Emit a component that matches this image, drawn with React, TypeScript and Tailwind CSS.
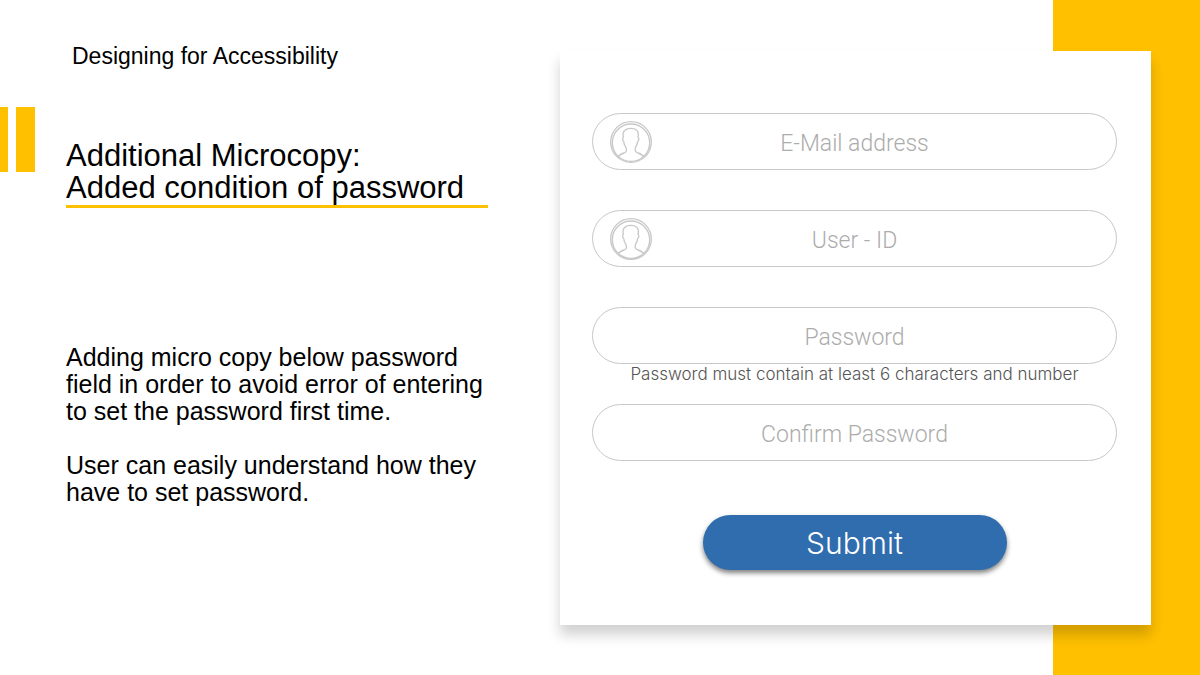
import React from "react";

function PersonIcon() {
  return (
    <svg
      viewBox="0 0 126 126"
      className="h-[42px] w-[42px] shrink-0"
      fill="none"
      stroke="#c8c8c8"
      strokeWidth="4"
      strokeLinejoin="round"
      aria-hidden="true"
    >
      <circle cx="63" cy="63" r="61" />
      <circle cx="63" cy="65" r="56" />
      <path d="M24 108 C28 101 36 98 42 96 C47 94 49 93 49 89 C50 86 49 82 47 78 C43 74 42 68 41 61 C37 59 37 51 40 50 C38 38 39 31 45 28 C50 21 72 20 79 27 C86 31 86 40 84 50 C88 51 87 59 83 61 C82 69 80 74 77 78 C75 82 75 86 76 89 C76 93 79 94 84 96 C90 98 98 101 102 108" />
    </svg>
  );
}

type FieldProps = {
  id: string;
  label: string;
  type: string;
  icon?: boolean;
  describedBy?: string;
};

function Field({ id, label, type, icon = false, describedBy }: FieldProps) {
  return (
    <label htmlFor={id} className="relative block">
      {icon && (
        <span className="pointer-events-none absolute inset-y-0 left-[18px] flex items-center">
          <PersonIcon />
        </span>
      )}
      <input
        id={id}
        type={type}
        placeholder={label}
        aria-label={label}
        aria-describedby={describedBy}
        className="block h-[57px] w-full rounded-full border border-[#c8c8c8] bg-white px-16 pt-1 text-center font-[Roboto,sans-serif] text-[23px] font-light text-[#555555] outline-none placeholder:text-[#acacac] placeholder:opacity-100 focus:border-[#2f6dae]"
      />
    </label>
  );
}

export default function App() {
  return (
    <main className="grid min-h-screen grid-cols-[560fr_493fr_98fr_49fr] grid-rows-[51px_1fr_50px] bg-white font-['Liberation_Sans',Arial,sans-serif] text-black">
      <section className="col-start-1 row-span-3 row-start-1 flex flex-col">
        <p className="pt-11 pl-[72px] text-[23px] leading-6">Designing for Accessibility</p>

        <div className="mt-[39px] flex items-start">
          <div className="flex w-[66px] shrink-0 gap-2" aria-hidden="true">
            <span className="h-[65px] w-2 bg-[#ffc000]" />
            <span className="h-[65px] w-[19px] bg-[#ffc000]" />
          </div>
          <h1 className="mt-[33px] w-[422px] border-b-3 border-[#ffc000] pb-px text-[31px] leading-8">
            Additional Microcopy:
            <br />
            Added condition of password
          </h1>
        </div>

        <div className="mt-[136px] box-content w-[432px] space-y-[27px] self-start pl-[66px] text-[25px] leading-[27px]">
          <p>
            Adding micro copy below password field in order to avoid error of entering to set the
            password first time.
          </p>
          <p>User can easily understand how they have to set password.</p>
        </div>
      </section>

      <div
        className="col-span-2 col-start-3 row-span-3 row-start-1 bg-[#ffc000]"
        aria-hidden="true"
      />

      <form
        className="z-10 col-span-2 col-start-2 row-start-2 flex flex-col bg-white pt-[62px] pr-[34px] pb-[55px] pl-8 shadow-[0_10px_12px_rgba(0,0,0,0.18)]"
        onSubmit={(event) => event.preventDefault()}
      >
        <div className="mb-10">
          <Field id="email" label="E-Mail address" type="email" icon />
        </div>
        <div className="mb-10">
          <Field id="user-id" label="User - ID" type="text" icon />
        </div>
        <div className="mb-5">
          <Field id="password" label="Password" type="password" describedBy="password-hint" />
          <p
            id="password-hint"
            className="text-center font-[Inter,sans-serif] text-[17px] leading-5 font-light text-[#555555]"
          >
            Password must contain at least 6 characters and number
          </p>
        </div>
        <Field id="confirm-password" label="Confirm Password" type="password" />
        <button
          type="submit"
          className="mt-[54px] h-[55px] w-[304px] self-center rounded-full bg-[#2f6dae] pt-0.5 font-[Inter,sans-serif] text-[30px] font-light text-white shadow-[0_3px_5px_rgba(0,0,0,0.5)]"
        >
          Submit
        </button>
      </form>
    </main>
  );
}
